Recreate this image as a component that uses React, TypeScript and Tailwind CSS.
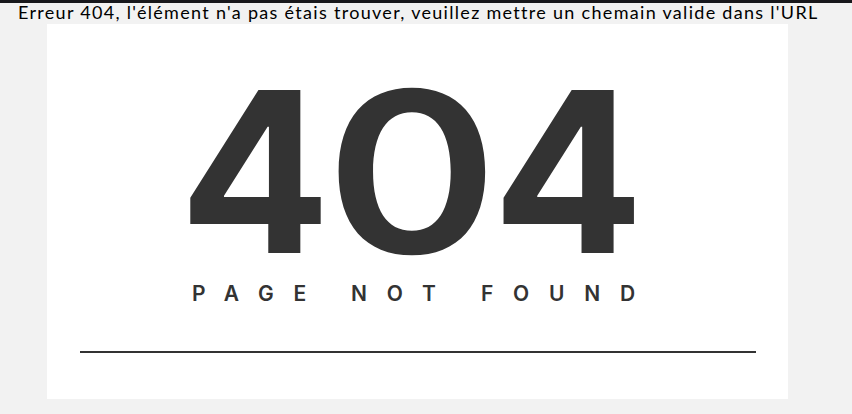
export default function App() {
  return (
    <div className="min-h-screen w-full bg-[#f2f2f2]">
      <div className="h-[3px] w-full bg-[#18181c]" />
      <p className="h-[21px] pl-[18px] font-['Lato',sans-serif] text-[18px] leading-[18px] tracking-[1.3px] text-black">
        Erreur 404, l'élément n'a pas étais trouver, veuillez mettre un chemain valide dans l'URL
      </p>
      <div className="ml-[47px] flex h-[375px] w-[741px] flex-col items-center bg-white">
        <div className="mt-[63px] flex h-[170px] pr-[12px] font-['Inter',sans-serif] text-[224px] font-bold leading-[170px] text-[#333333]">
          <span className="inline-block">4</span>
          <span className="mx-[7px] inline-block scale-x-[1.17] font-semibold">0</span>
          <span className="inline-block">4</span>
        </div>
        <div className="mt-[25px] pl-[12px] font-['Inter',sans-serif] text-[21px] font-semibold leading-[24px] tracking-[19.8px] text-[#333333]">
          PAGE NOT FOUND
        </div>
        <div className="mt-[45px] h-[2px] w-[676px] bg-[#333333]" />
      </div>
    </div>
  );
}
